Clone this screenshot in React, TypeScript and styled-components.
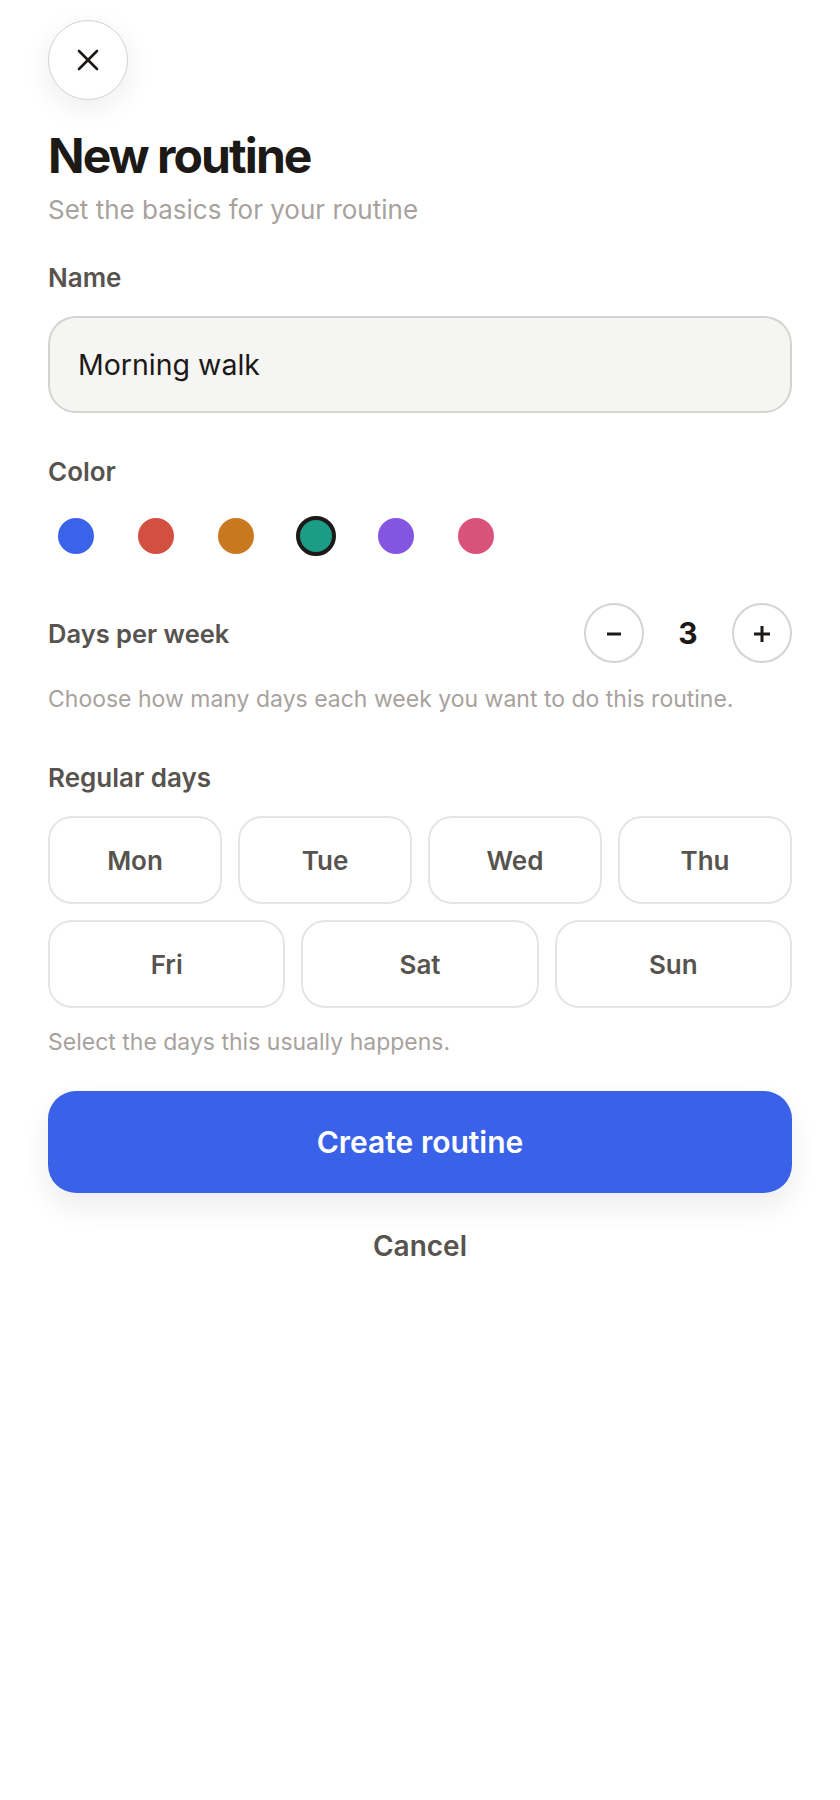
import * as React from 'react';
import styled, { createGlobalStyle } from 'styled-components';

const GlobalStyle = createGlobalStyle`
  html, body {
    margin: 0;
    padding: 0;
    background: #ffffff;
  }
  body {
    font-family: Inter, "Noto Sans", "Liberation Sans", sans-serif;
    color: #1c1917;
  }
  * {
    box-sizing: border-box;
  }
`;

const Page = styled.div`
  width: 840px;
  min-height: 1800px;
  padding: 20px 48px 48px;
  display: flex;
  flex-direction: column;
`;

const CloseButton = styled.button`
  width: 80px;
  height: 80px;
  border-radius: 50%;
  border: 1.5px solid #d6d3d1;
  background: #ffffff;
  box-shadow: 0 8px 28px rgba(28, 25, 23, 0.08);
  display: flex;
  align-items: center;
  justify-content: center;
  padding: 0;
  color: #1c1917;
`;

const Title = styled.h1`
  margin: 27px 0 0;
  font-size: 48px;
  line-height: 58px;
  font-weight: 700;
  letter-spacing: -1.9px;
  color: #1c1917;
`;

const SubTitle = styled.p`
  margin: 8px 0 0;
  font-size: 26px;
  line-height: 34px;
  color: #a8a29e;
`;

const Label = styled.div<{ $top: number }>`
  margin-top: ${(p) => p.$top}px;
  font-size: 26px;
  line-height: 32px;
  font-weight: 600;
  color: #57534e;
`;

const TextInput = styled.input`
  margin-top: 22px;
  width: 100%;
  height: 97px;
  border-radius: 28px;
  border: 2px solid #d6d3d1;
  background: #f5f5f4;
  padding: 0 28px;
  font-family: inherit;
  font-size: 28.5px;
  color: #1c1917;
  outline: none;
`;

const Swatches = styled.div`
  margin-top: 28px;
  display: flex;
  gap: 24px;
  height: 40px;
  align-items: center;
`;

const Swatch = styled.button<{ $color: string; $active?: boolean }>`
  width: 56px;
  height: 40px;
  border: none;
  background: transparent;
  padding: 0;
  display: flex;
  align-items: center;
  justify-content: center;

  &::after {
    content: '';
    display: block;
    width: ${(p) => (p.$active ? 40 : 36)}px;
    height: ${(p) => (p.$active ? 40 : 36)}px;
    border-radius: 50%;
    background: ${(p) => p.$color};
    border: ${(p) => (p.$active ? '4.5px solid #1c1917' : 'none')};
    box-sizing: border-box;
  }
`;

const StepRow = styled.div`
  margin-top: 47px;
  display: flex;
  align-items: center;
  justify-content: space-between;
`;

const RowLabel = styled.div`
  font-size: 25.5px;
  font-weight: 600;
  color: #57534e;
`;

const Stepper = styled.div`
  display: flex;
  align-items: center;
  gap: 24px;
`;

const RoundButton = styled.button`
  width: 60px;
  height: 60px;
  border-radius: 50%;
  border: 2px solid #d6d3d1;
  background: #ffffff;
  display: flex;
  align-items: center;
  justify-content: center;
  padding: 0;
  color: #1c1917;
`;

const Count = styled.span`
  min-width: 40px;
  text-align: center;
  font-size: 30px;
  font-weight: 700;
  color: #1c1917;
`;

const Hint = styled.p<{ $top: number }>`
  margin: ${(p) => p.$top}px 0 0;
  font-size: 23px;
  line-height: 30px;
  color: #a8a29e;
`;

const DayGrid = styled.div<{ $cols: number; $top: number }>`
  margin-top: ${(p) => p.$top}px;
  display: grid;
  grid-template-columns: repeat(${(p) => p.$cols}, 1fr);
  gap: 16px;
`;

const DayChip = styled.button`
  height: 88px;
  border-radius: 24px;
  border: 2px solid #e7e5e4;
  background: #ffffff;
  font-family: inherit;
  font-size: 26px;
  font-weight: 600;
  color: #57534e;
`;

const PrimaryButton = styled.button`
  margin-top: 34px;
  width: 100%;
  height: 102px;
  border: none;
  border-radius: 28px;
  background: #3a62e8;
  color: #ffffff;
  font-family: inherit;
  font-size: 30px;
  font-weight: 600;
  box-shadow: 0 14px 28px rgba(28, 25, 23, 0.08);
`;

const TextButton = styled.button`
  margin-top: 36px;
  align-self: center;
  border: none;
  background: transparent;
  font-family: inherit;
  font-size: 28px;
  font-weight: 600;
  color: #57534e;
  padding: 0;
`;

const colors = ['#3a63e9', '#d34f40', '#c8781f', '#1b9c84', '#8455e0', '#d9527a'];

export default function App() {
  const [selected, setSelected] = React.useState(3);
  const [count, setCount] = React.useState(3);
  return (
    <>
      <GlobalStyle />
      <Page>
        <CloseButton aria-label="Close">
          <svg width="22" height="22" viewBox="0 0 22 22" fill="none" stroke="currentColor" strokeWidth="2.6" strokeLinecap="round">
            <path d="M2 2L20 20M20 2L2 20" />
          </svg>
        </CloseButton>
        <Title>New routine</Title>
        <SubTitle>Set the basics for your routine</SubTitle>

        <Label $top={35}>Name</Label>
        <TextInput defaultValue="Morning walk" />

        <Label $top={43}>Color</Label>
        <Swatches>
          {colors.map((c, i) => (
            <Swatch key={c} $color={c} $active={i === selected} onClick={() => setSelected(i)} />
          ))}
        </Swatches>

        <StepRow>
          <RowLabel>Days per week</RowLabel>
          <Stepper>
            <RoundButton onClick={() => setCount(Math.max(1, count - 1))}>
              <svg width="18" height="18" viewBox="0 0 18 18" stroke="currentColor" strokeWidth="3">
                <path d="M2 10H16" />
              </svg>
            </RoundButton>
            <Count>{count}</Count>
            <RoundButton onClick={() => setCount(Math.min(7, count + 1))}>
              <svg width="18" height="18" viewBox="0 0 18 18" stroke="currentColor" strokeWidth="3">
                <path d="M1 10H17M9 2V18" />
              </svg>
            </RoundButton>
          </Stepper>
        </StepRow>
        <Hint $top={21}>Choose how many days each week you want to do this routine.</Hint>

        <Label $top={48}>Regular days</Label>
        <DayGrid $cols={4} $top={22}>
          {['Mon', 'Tue', 'Wed', 'Thu'].map((d) => (
            <DayChip key={d}>{d}</DayChip>
          ))}
        </DayGrid>
        <DayGrid $cols={3} $top={16}>
          {['Fri', 'Sat', 'Sun'].map((d) => (
            <DayChip key={d}>{d}</DayChip>
          ))}
        </DayGrid>
        <Hint $top={19}>Select the days this usually happens.</Hint>

        <PrimaryButton>Create routine</PrimaryButton>
        <TextButton>Cancel</TextButton>
      </Page>
    </>
  );
}
